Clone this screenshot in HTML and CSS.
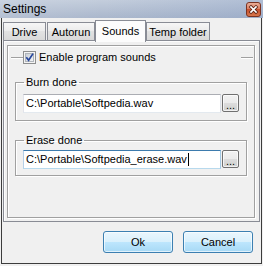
FILE: index.html
```html
<!DOCTYPE html>
<html>
<head>
<meta charset="utf-8">
<link rel="stylesheet" href="styles.css">
</head>
<body>
<div class="window">
  <div class="titlebar">
    <span class="title">Settings</span>
    <svg class="close" width="15" height="15" viewBox="0 0 15 15">
      <defs>
        <linearGradient id="cg" x1="0" y1="0" x2="0" y2="1">
          <stop offset="0" stop-color="#eab29e"/>
          <stop offset="0.5" stop-color="#d9785a"/>
          <stop offset="0.5" stop-color="#c8502e"/>
          <stop offset="1" stop-color="#d77a4e"/>
        </linearGradient>
      </defs>
      <rect x="0.5" y="0.5" width="14" height="14" rx="2.5" fill="url(#cg)" stroke="#7b3322"/>
      <path d="M5 5 L10 10 M10 5 L5 10" stroke="#5a2418" stroke-width="3.2" stroke-linecap="square"/>
      <path d="M5 5 L10 10 M10 5 L5 10" stroke="#ffffff" stroke-width="1.7" stroke-linecap="square"/>
    </svg>
  </div>
  <div class="frame">
    <div class="tabs">
      <div class="tab t-drive">Drive</div>
      <div class="tab t-autorun">Autorun</div>
      <div class="tab sel t-sounds">Sounds</div>
      <div class="tab t-temp">Temp folder</div>
    </div>
    <div class="panel">
      <div class="page">
        <div class="enable-row">
          <span class="rule short"></span>
          <svg class="check" width="13" height="13" viewBox="0 0 13 13">
            <defs>
              <linearGradient id="kg" x1="0" y1="0" x2="1" y2="1">
                <stop offset="0" stop-color="#c6ccd4"/>
                <stop offset="1" stop-color="#f6f7f8"/>
              </linearGradient>
            </defs>
            <rect x="0.5" y="0.5" width="12" height="12" fill="#f4f4f4" stroke="#8e8f8f"/>
            <rect x="2.5" y="2.5" width="8" height="8" fill="url(#kg)" stroke="#b0b5bb"/>
            <path d="M3.3 6.3 L5.6 9.2 L10 2.6" fill="none" stroke="#27469c" stroke-width="1.7"/>
          </svg>
          <span class="enable-label">Enable program sounds</span>
          <span class="rule long"></span>
        </div>
        <fieldset class="group burn">
          <legend>Burn done</legend>
          <div class="field-row">
            <div class="input">C:\Portable\Softpedia.wav</div>
            <div class="browse">...</div>
          </div>
        </fieldset>
        <fieldset class="group erase">
          <legend>Erase done</legend>
          <div class="field-row">
            <div class="input focus">C:\Portable\Softpedia_erase.wav<span class="caret"></span></div>
            <div class="browse">...</div>
          </div>
        </fieldset>
      </div>
    </div>
    <div class="buttons">
      <div class="btn">Ok</div>
      <div class="btn">Cancel</div>
    </div>
  </div>
</div>
</body>
</html>
```

FILE: styles.css
```css
html, body {
  margin: 0;
  padding: 0;
}
body {
  width: 263px;
  height: 266px;
  overflow: hidden;
  background: #f0f0f0;
  font-family: "Liberation Sans", Arial, sans-serif;
  font-size: 11px;
  color: #000;
}
.window {
  width: 263px;
  height: 266px;
}
.titlebar {
  height: 18px;
  box-sizing: border-box;
  display: flex;
  align-items: center;
  justify-content: space-between;
  padding: 0 2px 0 3px;
  background:
    linear-gradient(to right, rgba(255,255,255,0.12), rgba(255,255,255,0) 40%, rgba(120,145,190,0.25) 100%),
    linear-gradient(to bottom, #c3cddc, #aab7cc);
}
.title {
  font-size: 12px;
  line-height: 14px;
  color: #000;
}
.close {
  display: block;
  margin-top: 0;
}
.frame {
  margin: 0 1px;
  height: 246px;
  box-sizing: border-box;
  border: 1px solid #3c3c3c;
  border-top: 0;
  display: flex;
  flex-direction: column;
}
.tabs {
  display: flex;
  align-items: flex-end;
  height: 20px;
  margin-top: 2px;
  padding-left: 1px;
}
.tab {
  box-sizing: border-box;
  height: 18px;
  border: 1px solid #898c95;
  border-bottom: 0;
  background: linear-gradient(to bottom, #f6f6f6, #ebebeb 50%, #e2e2e2 50%, #d9d9d9);
  text-align: center;
  line-height: 16px;
  padding-top: 1px;
  white-space: nowrap;
}
.t-drive { width: 43px; }
.t-autorun { width: 48px; margin-left: 1px; }
.t-sounds { width: 51px; }
.t-temp { width: 64px; }
.tab.sel {
  height: 22px;
  margin-bottom: -2px;
  position: relative;
  z-index: 1;
  background: #fcfcfc;
  line-height: 18px;
  padding-top: 1px;
}
.panel {
  margin-left: 1px;
  width: 257px;
  height: 182px;
  box-sizing: border-box;
  border: 1px solid #898c95;
  background: #f0f0f0;
  box-shadow: inset 1px 1px #fcfcfc;
}
.page {
  margin: 4px 0 0 3px;
  width: 248px;
  height: 173px;
  box-sizing: border-box;
  border: 1px solid #a0a0a0;
  box-shadow: inset 1px 1px #fff, 1px 1px #fff;
  overflow: visible;
}
.enable-row {
  display: flex;
  align-items: center;
  height: 13px;
  margin-top: 5px;
  padding: 0 1px 0 3px;
}
.rule {
  display: block;
  height: 1px;
  width: 12px;
  background: #a0a0a0;
  box-shadow: 0 1px #fff;
}
.rule.long {
  margin-left: auto;
}
.check {
  display: block;
  flex: none;
}
.enable-label {
  margin-left: 3px;
  line-height: 13px;
  white-space: nowrap;
}
.group {
  margin: 0 0 0 7px;
  width: 232px;
  min-width: 0;
  box-sizing: border-box;
  border: 1px solid #a0a0a0;
  box-shadow: inset 1px 1px #fff, 1px 1px #fff;
  padding: 0 7px 7px 7px;
}
.group legend {
  padding: 0 2px;
  margin-left: 1px;
  line-height: 13px;
}
.burn {
  margin-top: 12px;
}
.erase {
  margin-top: 13px;
  padding-bottom: 6px;
}
.field-row {
  display: flex;
  align-items: flex-start;
  gap: 1px;
  margin-top: 5px;
}
.erase .field-row {
  margin-top: 3px;
}
.input {
  width: 198px;
  height: 19px;
  box-sizing: border-box;
  border: 1px solid;
  border-color: #abadb3 #dbdfe6 #e3e9ef #e2e3ea;
  background: #fff;
  padding-left: 2px;
  line-height: 17px;
  white-space: nowrap;
  overflow: hidden;
  display: flex;
  align-items: center;
}
.input.focus {
  border-color: #3d7bad #a4c9e3 #b7d9ed #b5cfe7;
}
.caret {
  display: inline-block;
  width: 1px;
  height: 13px;
  background: #000;
  margin-left: 1px;
}
.browse {
  width: 17px;
  height: 18px;
  box-sizing: border-box;
  border: 1px solid #707070;
  border-radius: 2px;
  background: linear-gradient(to bottom, #f2f2f2, #ebebeb 50%, #dddddd 50%, #cfcfcf);
  box-shadow: inset 0 0 0 1px rgba(255,255,255,0.7);
  text-align: center;
  line-height: 20px;
  overflow: hidden;
  font-size: 11px;
}
.buttons {
  display: flex;
  justify-content: flex-end;
  gap: 10px;
  margin-top: 9px;
  padding-right: 8px;
}
.btn {
  width: 70px;
  height: 22px;
  box-sizing: border-box;
  border: 1px solid #3c7fb1;
  border-radius: 3px;
  background: linear-gradient(to bottom, #eaf6fd, #d9f0fc 50%, #bee6fd 50%, #a7d9f5);
  box-shadow: inset 0 0 0 1px rgba(255,255,255,0.65);
  text-align: center;
  line-height: 20px;
}
```
